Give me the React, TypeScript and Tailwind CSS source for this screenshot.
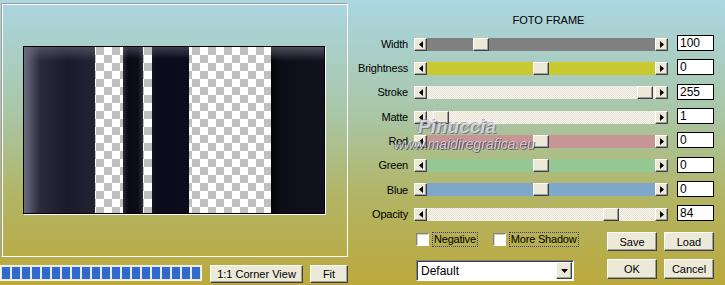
import React from 'react';

const font = "font-['Liberation_Sans',Arial,sans-serif]";

const rows = [
  { label: 'Width', value: '100', thumb: 46, track: 'bg-[#808080]' },
  { label: 'Brightness', value: '0', thumb: 106, track: 'bg-[#c9c932]' },
  { label: 'Stroke', value: '255', thumb: 210, track: 'bg-[repeating-conic-gradient(#e6e2d4_0_25%,#f8f6ee_0_50%)] bg-[length:2px_2px]' },
  { label: 'Matte', value: '1', thumb: 6, track: 'bg-[repeating-conic-gradient(#e6e2d4_0_25%,#f8f6ee_0_50%)] bg-[length:2px_2px]' },
  { label: 'Red', value: '0', thumb: 106, track: 'bg-[#c89597]' },
  { label: 'Green', value: '0', thumb: 106, track: 'bg-[#95c895]' },
  { label: 'Blue', value: '0', thumb: 106, track: 'bg-[#7ea7c9]' },
  { label: 'Opacity', value: '84', thumb: 176, track: 'bg-[repeating-conic-gradient(#e6e2d4_0_25%,#f8f6ee_0_50%)] bg-[length:2px_2px]' },
];

const bevel =
  'bg-[#ece9d8] border border-t-white border-l-white border-r-[#404040] border-b-[#404040] shadow-[inset_-1px_-1px_0_#a0a0a0]';

const ArrowBtn = ({ dir }: { dir: 'left' | 'right' }) => (
  <div className={`w-[13px] h-[13px] shrink-0 flex items-center justify-center ${bevel}`}>
    <svg width="4" height="7" viewBox="0 0 4 7">
      {dir === 'left' ? <path d="M4 0 L0 3.5 L4 7 Z" fill="#000" /> : <path d="M0 0 L4 3.5 L0 7 Z" fill="#000" />}
    </svg>
  </div>
);

const Button = ({ label, w, h }: { label: string; w: string; h: string }) => (
  <div className={`${w} ${h} flex items-center justify-center text-[11px] text-black ${bevel}`}>{label}</div>
);

const Checkbox = ({ label }: { label: string }) => (
  <div className="flex items-center gap-[3px]">
    <div className="w-[13px] h-[13px] bg-white border border-t-[#808080] border-l-[#808080] border-r-white border-b-white shadow-[inset_1px_1px_0_#d4d0c8]" />
    <span className="px-[1px] leading-[13px] border border-dotted border-[#3a3a9a] text-[11px] tracking-[-0.2px]">{label}</span>
  </div>
);

const Stripe = ({ w, cls }: { w: string; cls: string }) => <div className={`${w} h-full ${cls}`} />;

export default function App() {
  return (
    <div
      className={`${font} relative w-[725px] h-[285px] overflow-hidden flex bg-[linear-gradient(to_bottom,#abd6e3_0%,#a9c6a6_40%,#b3b463_70%,#bba93c_100%)] text-black`}
    >
      {/* left: preview */}
      <div className="w-[348px] shrink-0 flex flex-col">
        <div className="mt-[3px] ml-[1px] w-[347px] h-[254px] border border-t-[#9c9c9c] border-l-[#9c9c9c] border-r-white border-b-white shadow-[inset_1px_1px_0_#fff] pl-[21px] pt-[42px]">
          <div className="w-[302px] h-[168px] border border-black shadow-[1px_1px_0_#fff] flex bg-[repeating-conic-gradient(#c0c0c0_0_25%,#ffffff_0_50%)] bg-[length:16px_16px]">
            <Stripe
              w="w-[71px]"
              cls="bg-[linear-gradient(to_bottom,rgba(110,110,130,0.55),transparent_14px),linear-gradient(to_right,#6c6c80,#2c2b3e_16px,#1b1a2c_60%,#242334)]"
            />
            <Stripe w="w-[28px]" cls="" />
            <Stripe
              w="w-[20px]"
              cls="bg-[linear-gradient(to_bottom,rgba(110,110,130,0.5),transparent_12px),linear-gradient(to_right,#2a2a36,#0a0a14_5px,#0c0c18_75%,#2c2c38)]"
            />
            <Stripe w="w-[9px]" cls="" />
            <Stripe
              w="w-[37px]"
              cls="bg-[linear-gradient(to_bottom,rgba(110,110,130,0.5),transparent_12px),linear-gradient(to_right,#14141e,#0c0b1c_5px,#0d0c1e)]"
            />
            <Stripe w="w-[82px]" cls="" />
            <Stripe
              w="w-[53px]"
              cls="bg-[linear-gradient(to_bottom,rgba(120,120,135,0.6),transparent_14px),linear-gradient(to_right,#05050a,#0e0e18_10px,#12111f)]"
            />
          </div>
        </div>
        <div className="mt-[8px] flex items-start">
          <div className="w-[203px] h-[16px] bg-[#ece8d6] border border-[#f4f0e2] flex gap-[2px] pl-[1px] pt-[1px]">
            {Array.from({ length: 20 }).map((_, i) => (
              <div key={i} className="w-[8px] h-[12px] bg-[#2f6bcf]" />
            ))}
          </div>
          <div className="ml-[8px]">
            <Button label="1:1 Corner View" w="w-[93px]" h="h-[18px]" />
          </div>
          <div className="ml-[7px]">
            <Button label="Fit" w="w-[38px]" h="h-[18px]" />
          </div>
        </div>
      </div>

      {/* right: controls */}
      <div className="flex-1 flex flex-col">
        <div className="mt-[13px] h-[14px] text-center text-[11px] leading-[14px] pl-[24px]">FOTO FRAME</div>
        <div className="mt-[5px] flex flex-col">
          {rows.map((r) => (
            <div key={r.label} className="h-[24.3px] flex items-center">
              <span className="w-[60px] text-right text-[11px] tracking-[-0.2px]">{r.label}</span>
              <div className="ml-[6px] w-[254px] h-[13px] flex">
                <ArrowBtn dir="left" />
                <div className={`flex-1 h-[13px] ${r.track}`}>
                  <div className={`w-[16px] h-[13px] ${bevel}`} style={{ marginLeft: r.thumb }} />
                </div>
                <ArrowBtn dir="right" />
              </div>
              <div className="ml-[9px] -mt-[2px] w-[37px] h-[16px] bg-white border border-black text-[12px] leading-[14px] pl-[2px]">
                {r.value}
              </div>
            </div>
          ))}
        </div>

        <div className="flex">
          <div className="ml-[68px] w-[191px] flex flex-col">
            <div className="mt-[6px] flex items-center gap-[15px]">
              <Checkbox label="Negative" />
              <Checkbox label="More Shadow" />
            </div>
            <div className="mt-[13px] w-[158px] h-[21px] bg-white border border-t-[#808080] border-l-[#808080] border-r-white border-b-white shadow-[inset_1px_1px_0_#404040] flex items-center">
              <span className="flex-1 pl-[4px] text-[12px]">Default</span>
              <div className={`w-[16px] h-[17px] mr-[1px] flex items-center justify-center ${bevel}`}>
                <svg width="7" height="4" viewBox="0 0 7 4">
                  <path d="M0 0 H7 L3.5 4 Z" fill="#000" />
                </svg>
              </div>
            </div>
          </div>
          <div className="grid grid-cols-[50px_50px] gap-x-[7px] gap-y-[6px] pt-[6px]">
            <Button label="Save" w="w-[50px]" h="h-[19px]" />
            <Button label="Load" w="w-[50px]" h="h-[19px]" />
            <Button label="OK" w="w-[50px]" h="h-[20px]" />
            <Button label="Cancel" w="w-[50px]" h="h-[20px]" />
          </div>
        </div>
      </div>

      {/* watermark */}
      <div className="absolute left-[418px] top-[113px] text-[19px] italic font-bold text-[rgba(235,235,245,0.75)] [text-shadow:1px_1px_0_rgba(90,90,110,0.7),-1px_-1px_0_rgba(120,120,140,0.5)] pointer-events-none">
        Pinuccia
      </div>
      <div className="absolute left-[394px] top-[134px] text-[14px] italic text-[rgba(240,240,245,0.7)] [text-shadow:1px_1px_0_rgba(60,60,80,0.7),-1px_0_0_rgba(60,60,80,0.5)] pointer-events-none">
        www.maidiregrafica.eu
      </div>
    </div>
  );
}
